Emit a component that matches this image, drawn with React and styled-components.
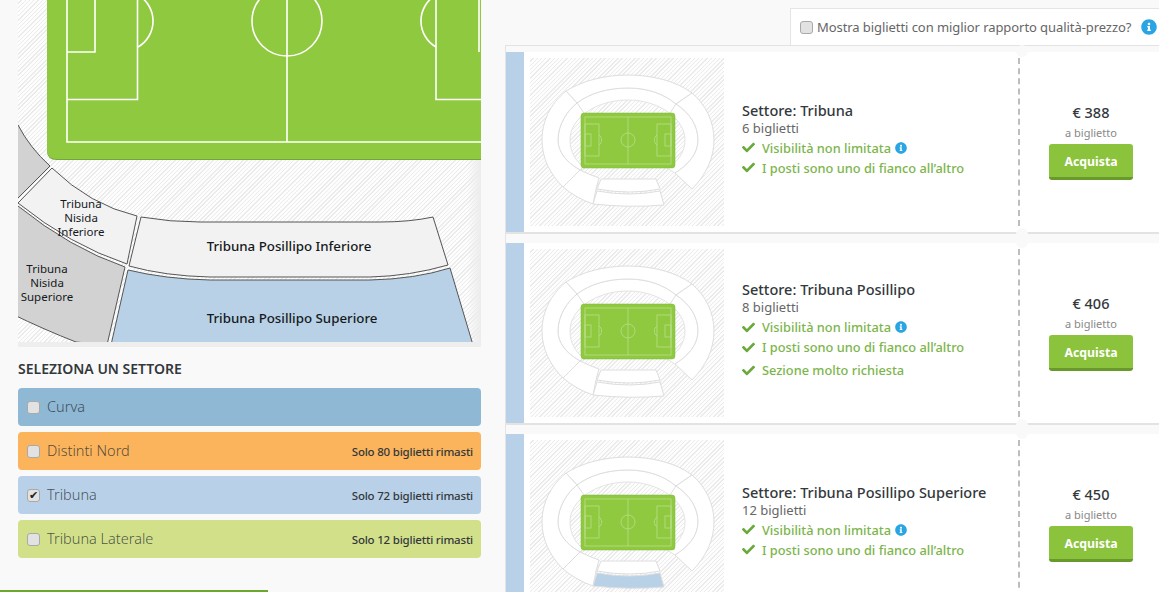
import styled, { createGlobalStyle } from "styled-components";
import { FaCheck, FaInfoCircle } from "react-icons/fa";

const font = `"Noto Sans", "Open Sans", "Liberation Sans", sans-serif`;
const hatch = `repeating-linear-gradient(135deg, #fdfdfd 0, #fdfdfd 2px, #ebebeb 2px, #ebebeb 3px)`;

const Global = createGlobalStyle`
  html, body {
    margin: 0;
    height: 592px;
    overflow: hidden;
    background: #f9f9f9;
    font-family: ${font};
  }
`;

const Page = styled.div`
  display: flex;
  align-items: flex-start;
  height: 592px;
  position: relative;
  overflow: hidden;
`;

const Left = styled.div`
  width: 463px;
  margin: 0 24px 0 18px;
  flex: none;
`;

const MapPanel = styled.div`
  height: 342px;
  border-bottom: 5px solid #efeeee;
  background: linear-gradient(to right, transparent 97%, #ececec), ${hatch};
  svg {
    display: block;
  }
`;

const Heading = styled.h2`
  margin: 13px 0 11px;
  font-size: 14px;
  line-height: 17px;
  font-weight: 600;
  color: #33383c;
`;

const SectorList = styled.div`
  display: flex;
  flex-direction: column;
  gap: 6px;
`;

const SectorRow = styled.label`
  display: flex;
  align-items: center;
  height: 38px;
  padding: 0 8px 0 9px;
  border-radius: 4px;
  background: ${(p) => p.$bg};
`;

const Box = styled.input.attrs({ type: "checkbox", readOnly: true })`
  appearance: none;
  flex: none;
  width: 13px;
  height: 13px;
  margin: 0;
  border: 1px solid #a9a9a9;
  border-radius: 3px;
  background: #e2e2e2;
  position: relative;
  &:checked::before {
    content: "✔";
    position: absolute;
    left: 1px;
    top: -2px;
    font-size: 11px;
    line-height: 14px;
    color: #222;
  }
`;

const SectorName = styled.span`
  margin-left: 7px;
  padding-bottom: 2px;
  font-size: 14.5px;
  font-weight: 300;
  color: rgba(40, 48, 54, 0.8);
`;

const Remaining = styled.span`
  margin-left: auto;
  font-size: 11.5px;
  font-weight: 500;
  letter-spacing: -0.2px;
  color: #33383c;
`;

const BottomBar = styled.div`
  position: absolute;
  left: 0;
  bottom: 0;
  width: 268px;
  height: 2px;
  background: #6aa92e;
`;

const Right = styled.div`
  flex: 1;
  min-width: 0;
`;

const FilterBar = styled.label`
  display: flex;
  align-items: center;
  width: 369px;
  height: 37px;
  margin: 8px 0 0 auto;
  padding-left: 9px;
  box-sizing: border-box;
  background: #fff;
  border: 1px solid #e5e5e5;
  border-width: 1px 0 0 1px;
  font-size: 13px;
  letter-spacing: -0.07px;
  white-space: nowrap;
  color: #666;
  svg {
    margin-left: 10px;
    color: #29a5e3;
    font-size: 16px;
  }
`;

const FilterText = styled.span`
  margin-left: 4px;
`;

const Tickets = styled.div`
  border-top: 1px solid #e3e3e3;
  border-left: 1px solid #e3e3e3;
  padding-top: 6px;
`;

const Ticket = styled.div`
  display: flex;
  height: 180px;
  margin-bottom: 9px;
  background: #fff;
  border-bottom: 2px solid #e3e3e3;
`;

const Stripe = styled.div`
  width: 18px;
  flex: none;
  background: #b9d1e8;
`;

const Thumb = styled.div`
  width: 194px;
  height: 168px;
  flex: none;
  margin: 6px 18px 0 6px;
  background: ${hatch};
  svg {
    display: block;
  }
`;

const Info = styled.div`
  flex: 1;
  min-width: 0;
  display: flex;
  flex-direction: column;
  justify-content: center;
  padding-bottom: 7px;
`;

const Title = styled.div`
  font-size: 14.5px;
  line-height: 20px;
  font-weight: 500;
  color: #33383c;
`;

const Count = styled.div`
  margin-bottom: 1px;
  font-size: 13px;
  line-height: 17px;
  color: #666;
`;

const Feature = styled.div`
  display: flex;
  align-items: center;
  height: 20px;
  margin-top: ${(p) => (p.$gap ? "3px" : "0")};
  font-size: 12.8px;
  font-weight: 500;
  color: #7cb54c;
  > svg:first-child {
    width: 13px;
    height: 13px;
    margin-right: 7px;
    color: #6aa93a;
  }
  > svg + span + svg {
    width: 12px;
    height: 12px;
    margin-left: 4px;
    color: #29a5e3;
  }
`;

const PriceCol = styled.div`
  width: 140px;
  flex: none;
  box-sizing: border-box;
  position: relative;
  padding: 0 0 0 4px;
  display: flex;
  flex-direction: column;
  align-items: center;
  &::before {
    content: "";
    position: absolute;
    left: -1px;
    top: 6px;
    bottom: 6px;
    border-left: 2px dashed #bdbdbd;
  }
`;

const Notch = styled.span`
  position: absolute;
  left: -3px;
  width: 12px;
  height: 12px;
  border-radius: 50%;
  background: #f9f9f9;
  ${(p) => (p.$top ? "top: -7px;" : "bottom: -8px;")}
`;

const Price = styled.div`
  margin-top: 50px;
  font-size: 14.5px;
  line-height: 20px;
  font-weight: 500;
  color: #33383c;
`;

const PerTicket = styled.div`
  margin-top: 3px;
  font-size: 11px;
  line-height: 16px;
  color: #888;
`;

const BuyButton = styled.button`
  width: 84px;
  height: 36px;
  margin-top: 3px;
  padding: 2px 0 0;
  border: 0;
  border-bottom: 3px solid #679a2b;
  border-radius: 3px;
  background: #8bc33c;
  color: #fff;
  font-family: ${font};
  font-size: 12.3px;
  font-weight: 700;
`;

const mapLabel = { fontFamily: "Noto Sans, sans-serif", fill: "#15191c", textAnchor: "middle" };

const StadiumMap = () => (
  <svg width="463" height="342" viewBox="18 0 463 342">
    <g fill="#d2d2d2" stroke="#555" strokeWidth="1">
      <path d="M10 115 L18 125 Q30 148 50 166 L10 206 Z" />
      <path d="M10 200 L18 206 Q70 248 125 267 L107 345 L76 342 Q45 330 10 313 Z" />
    </g>
    <g fill="#f2f2f2" stroke="#555" strokeWidth="1">
      <path d="M52 168 Q90 205 137 216 L127 264 Q70 245 18 203 Z" />
      <path d="M141 217 Q170 222 200 222 L380 222 Q410 222 433 217 L448 265 Q410 276 370 277 L210 277 Q165 276 129 266 Z" />
    </g>
    <path d="M128 270 Q165 279 210 280 L370 280 Q415 279 450 268 L473 345 L111 345 Z" fill="#b9d1e7" stroke="#555" />
    <path d="M47 -10 L47 151 Q47 160 57 160 L490 160 L490 -10 Z" fill="#6fa838" />
    <path d="M47 -10 L47 150 Q47 159 57 159 L490 159 L490 -10 Z" fill="#8fc93f" />
    <g fill="none" stroke="#fff" strokeWidth="1.6">
      <path d="M67 -5 L67 142 L490 142" />
      <path d="M287 -5 L287 142" />
      <circle cx="287" cy="21" r="35" />
      <path d="M67 99.5 L137.5 99.5 L137.5 -5" />
      <path d="M67 52 L95 52 L95 -5" />
      <path d="M138 47 A30 30 0 0 0 138 -5" />
      <path d="M490 99.5 L436 99.5 L436 -5" />
      <path d="M479 52 L479 -5" />
      <path d="M436 47 A30 30 0 0 1 436 -5" />
    </g>
    <g fontSize="11.5" style={mapLabel}>
      <text x="81" y="208">
        <tspan x="81">Tribuna</tspan>
        <tspan x="81" dy="14">Nisida</tspan>
        <tspan x="81" dy="14">Inferiore</tspan>
      </text>
      <text x="47" y="273">
        <tspan x="47">Tribuna</tspan>
        <tspan x="47" dy="14">Nisida</tspan>
        <tspan x="47" dy="14">Superiore</tspan>
      </text>
    </g>
    <g fontSize="13.3" fontWeight="500" style={mapLabel}>
      <text x="289" y="251">Tribuna Posillipo Inferiore</text>
      <text x="292" y="323">Tribuna Posillipo Superiore</text>
    </g>
  </svg>
);

// little stadium plan in each ticket, outer is the colour of the far stand
const StadiumThumb = ({ outer = "#fff" }) => (
  <svg width="194" height="168" viewBox="0 0 194 168">
    <path
      d="M50 112 C36 104 28 94 28 82 C28 66 38 52 47 45 C60 35 78 30 98 30 C118 30 134 36 146 46 C160 55 168 68 168 82 C168 96 158 107 145 115 L137 110 C148 104 155 94 155 82 C155 60 128 42 98 42 C66 42 40 60 40 82 C40 94 46 104 55 110 Z"
      fill="#fff"
      stroke="#e4e4e4"
    />
    <g fill="#fff" stroke="#dedede" strokeWidth="1">
      <path d="M36 33 C52 23 74 17 98 17 C122 17 146 23 162 35 L146 46 C134 36 118 30 98 30 C78 30 60 35 47 45 Z" />
      <path d="M36 33 C20 46 12 64 12 82 C12 100 20 116 33 129 L50 112 C36 104 28 94 28 82 C28 66 38 52 47 45 Z" />
      <path d="M162 35 C176 47 184 64 184 82 C184 100 176 117 162 131 L145 115 C158 107 168 96 168 82 C168 68 160 55 146 46 Z" />
      <path d="M50 112 Q60 117 69 120 L66 131 L63 146 Q46 140 33 129 Z" />
      <path d="M71 121 L126 121 L130 131 Q100 137 67 131 Z" />
      <path d="M67 133 Q100 139 130 133 L134 147 Q100 150 63 146 Z" fill={outer} />
      <path d="M47 45 L54 55 M146 46 L140 55 M50 112 L54 108" />
    </g>
    <rect x="51" y="55" width="94" height="55" rx="3" fill="#8fc93f" stroke="#7fb838" strokeWidth="0.5" />
    <g fill="none" stroke="#b9de8a" strokeWidth="0.8">
      <rect x="55" y="59" width="86" height="47" />
      <path d="M98 59 L98 106" />
      <circle cx="98" cy="82" r="7" />
      <rect x="55" y="66" width="14" height="32" />
      <rect x="55" y="76" width="6" height="12" />
      <rect x="127" y="66" width="14" height="32" />
      <rect x="135" y="76" width="6" height="12" />
      <path d="M69 77 A6 6 0 0 1 69 87" />
      <path d="M127 77 A6 6 0 0 0 127 87" />
    </g>
  </svg>
);

const sectors = [
  { name: "Curva", bg: "#8fb8d4" },
  { name: "Distinti Nord", bg: "#fbb45b", left: "Solo 80 biglietti rimasti" },
  { name: "Tribuna", bg: "#b9d1e8", left: "Solo 72 biglietti rimasti", checked: true },
  { name: "Tribuna Laterale", bg: "#d3e08a", left: "Solo 12 biglietti rimasti" },
];

const tickets = [
  { sector: "Tribuna", count: "6 biglietti", price: "€ 388" },
  { sector: "Tribuna Posillipo", count: "8 biglietti", price: "€ 406", hot: true },
  { sector: "Tribuna Posillipo Superiore", count: "12 biglietti", price: "€ 450", outer: "#b9d1e7" },
];

const App = () => {
  return (
    <Page>
      <Global />
      <Left>
        <MapPanel>
          <StadiumMap />
        </MapPanel>
        <Heading>SELEZIONA UN SETTORE</Heading>
        <SectorList>
          {sectors.map((s) => (
            <SectorRow key={s.name} $bg={s.bg}>
              <Box defaultChecked={s.checked} />
              <SectorName>{s.name}</SectorName>
              {s.left && <Remaining>{s.left}</Remaining>}
            </SectorRow>
          ))}
        </SectorList>
      </Left>
      <Right>
        <FilterBar>
          <Box />
          <FilterText>Mostra biglietti con miglior rapporto qualità-prezzo?</FilterText>
          <FaInfoCircle />
        </FilterBar>
        <Tickets>
          {tickets.map((t) => (
            <Ticket key={t.sector}>
              <Stripe />
              <Thumb>
                <StadiumThumb outer={t.outer} />
              </Thumb>
              <Info>
                <Title>Settore: {t.sector}</Title>
                <Count>{t.count}</Count>
                <Feature>
                  <FaCheck />
                  <span>Visibilità non limitata</span>
                  <FaInfoCircle />
                </Feature>
                <Feature>
                  <FaCheck />
                  <span>I posti sono uno di fianco all’altro</span>
                </Feature>
                {t.hot && (
                  <Feature $gap>
                    <FaCheck />
                    <span>Sezione molto richiesta</span>
                  </Feature>
                )}
              </Info>
              <PriceCol>
                <Notch $top />
                <Price>{t.price}</Price>
                <PerTicket>a biglietto</PerTicket>
                <BuyButton>Acquista</BuyButton>
                <Notch />
              </PriceCol>
            </Ticket>
          ))}
        </Tickets>
      </Right>
      <BottomBar />
    </Page>
  );
};

export default App;
